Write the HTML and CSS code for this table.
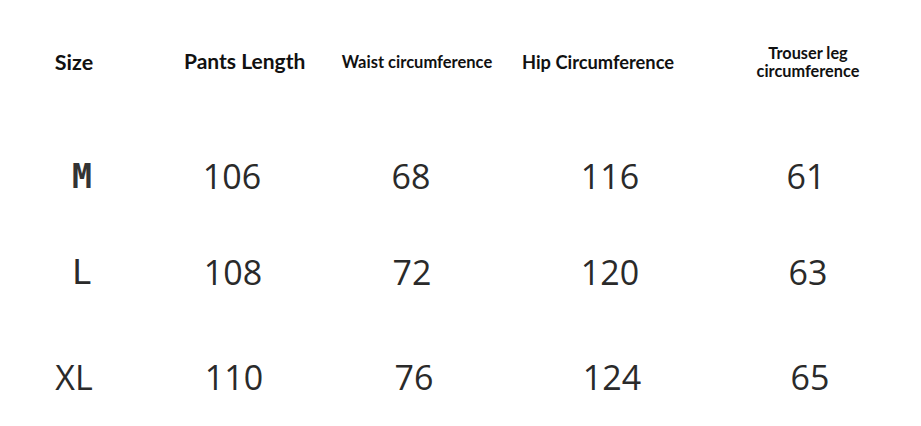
FILE: index.html
```html
<!DOCTYPE html>
<html lang="en">
<head>
<meta charset="utf-8">
<title>Size chart</title>
<link rel="stylesheet" href="styles.css">
</head>
<body>
<div class="chart">
  <div class="row head">
    <div class="cell c1 sh-m8 h-size">Size</div>
    <div class="cell c2 sh-p10 h-pants">Pants Length</div>
    <div class="cell c3 sh-p6 h-waist">Waist circumference</div>
    <div class="cell c4 sh-m12 h-hip">Hip Circumference</div>
    <div class="cell c5 sh-p2 h-leg">Trouser leg<br>circumference</div>
  </div>
  <div class="row r1">
    <div class="cell c1 size mono bold">M</div>
    <div class="cell c2 num">106</div>
    <div class="cell c3 num">68</div>
    <div class="cell c4 num">116</div>
    <div class="cell c5 num">61</div>
  </div>
  <div class="row r2">
    <div class="cell c1 size mono">L</div>
    <div class="cell c2 num sh-p1">108</div>
    <div class="cell c3 num sh-p1">72</div>
    <div class="cell c4 num">120</div>
    <div class="cell c5 num sh-p2">63</div>
  </div>
  <div class="row r3">
    <div class="cell c1 size sans sh-m8">XL</div>
    <div class="cell c2 num sh-p2">110</div>
    <div class="cell c3 num sh-p3">76</div>
    <div class="cell c4 num sh-p2">124</div>
    <div class="cell c5 num sh-p4">65</div>
  </div>
</div>
</body>
</html>
```
FILE: styles.css
```css
html, body {
  margin: 0;
  padding: 0;
  background: #ffffff;
}
body {
  width: 921px;
  height: 426px;
  overflow: hidden;
}
.chart {
  display: flex;
  flex-direction: column;
}
.row {
  display: grid;
  grid-template-columns: 164px 136px 222px 176px 216px;
  align-items: center;
}
.head { height: 124px; }
.r1 { height: 104px; }
.r2 { height: 88px; }
.r3 { height: 122px; }

.cell {
  text-align: center;
  white-space: nowrap;
}
.head .cell {
  font-family: Lato, "Liberation Sans", sans-serif;
  font-weight: 700;
  color: #111;
}
.h-size { font-size: 21.5px; }
.h-pants { font-size: 21px; padding-bottom: 3px; }
.h-waist { font-size: 16.5px; }
.h-hip { font-size: 18.3px; }
.h-leg { font-size: 16.3px; line-height: 18px; }

.num, .size {
  font-family: "Open Sans", "Noto Sans", sans-serif;
  font-size: 34px;
  font-weight: 400;
  color: #2a2a2a;
  line-height: 1;
}
.mono {
  font-family: "DejaVu Sans Mono", monospace;
  font-size: 33px;
  font-weight: 400;
}
.bold { font-weight: 700; color: #333; }
.sans { font-family: "Open Sans", sans-serif; }

.sh-m8 { padding-right: 16px; }
.sh-m12 { padding-right: 24px; }
.sh-p1 { padding-left: 2px; }
.sh-p2 { padding-left: 4px; }
.sh-p3 { padding-left: 6px; }
.sh-p4 { padding-left: 8px; }
.sh-p6 { padding-left: 12px; }
.sh-p10 { padding-left: 20px; }
```
